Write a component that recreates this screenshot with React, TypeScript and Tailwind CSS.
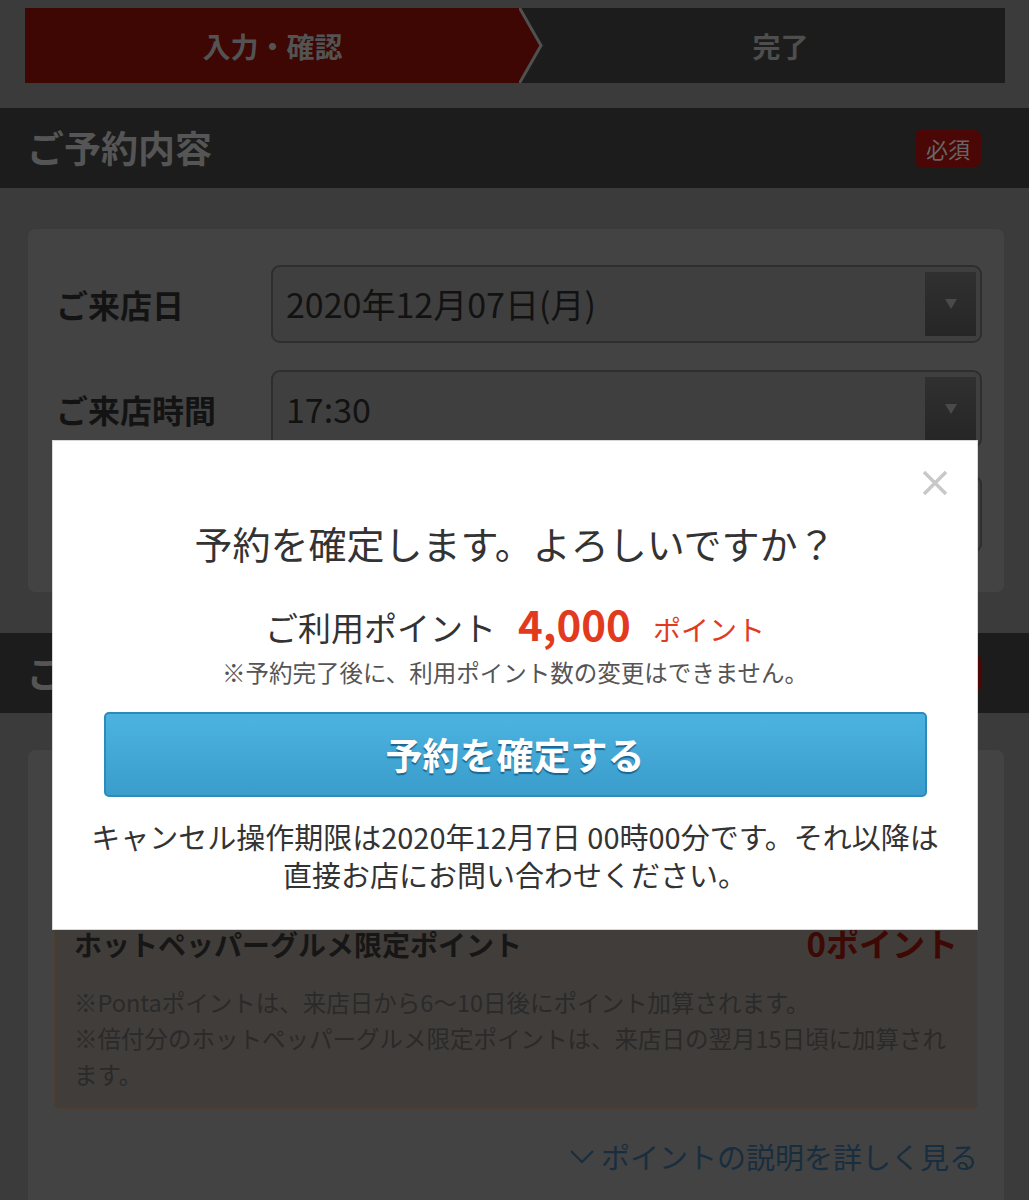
import React from "react";

const F = { fontFamily: '"Noto Sans CJK JP", "Noto Sans", sans-serif' };

function Select({ value }: { value: string }) {
  return (
    <div className="flex-1 h-[78px] rounded-[9px] border-2 border-[#2e2e2e] bg-[#3f3f3f] flex items-center relative">
      <span className="pl-[13px] text-[34px] text-[#121212] leading-none">{value}</span>
      <div className="absolute right-[4px] top-[5px] bottom-[5px] w-[51px] bg-gradient-to-b from-[#303030] to-[#262626] flex items-center justify-center">
        <svg width="14" height="12" viewBox="0 0 14 12">
          <polygon points="1,1 13,1 7,11" fill="#4a4a4a" />
        </svg>
      </div>
    </div>
  );
}

export default function App() {
  return (
    <div style={F} className="relative w-[1029px] h-[1200px] overflow-hidden bg-[#3b3b3b]">
      {/* step bar */}
      <div className="pt-[8px] pl-[25px] pr-[24px]">
        <div className="relative flex h-[75px]">
          <div className="w-[495px] bg-[#3e0703] flex items-center justify-center">
            <span className="text-[28px] font-bold text-[#535353]">入力・確認</span>
          </div>
          <div className="flex-1 bg-[#1c1c1c] flex items-center justify-center pl-[36px]">
            <span className="text-[28px] font-bold text-[#4e4e4e]">完了</span>
          </div>
          <svg className="absolute left-[494px] top-0" width="30" height="75" viewBox="0 0 30 75">
            <polygon points="0,0 1,0 22,37.5 1,75 0,75" fill="#3e0703" />
            <polyline points="0,-1 22,37.5 0,76" fill="none" stroke="#505050" strokeWidth="3" />
          </svg>
        </div>
      </div>

      {/* section header */}
      <div className="mt-[25px] h-[80px] bg-[#1c1c1c] flex items-center justify-between pl-[27px] pr-[48px]">
        <span className="text-[37px] font-bold text-[#555555]">ご予約内容</span>
        <span className="h-[37px] px-[11px] rounded-[6px] bg-[#4a0705] text-[22px] text-[#666666] flex items-center">必須</span>
      </div>

      {/* card 1 */}
      <div className="mt-[40px] ml-[27px] mr-[24px] rounded-[8px] bg-[#434343] border border-[#3a3a3a] pt-[36px] pb-[39px] pl-[28px] pr-[22px] flex flex-col gap-[27px]">
        <div className="flex items-center">
          <span className="w-[215px] text-[32px] font-bold text-[#131313]">ご来店日</span>
          <Select value="2020年12月07日(月)" />
        </div>
        <div className="flex items-center">
          <span className="w-[215px] text-[32px] font-bold text-[#131313]">ご来店時間</span>
          <Select value="17:30" />
        </div>
        <div className="flex items-center">
          <span className="w-[215px] text-[32px] font-bold text-[#131313]">ご来店人数</span>
          <Select value="2名" />
        </div>
      </div>

      {/* section header 2 */}
      <div className="mt-[40px] h-[80px] bg-[#1c1c1c] flex items-center justify-between pl-[27px] pr-[48px]">
        <span className="text-[37px] font-bold text-[#555555]">ご利用ポイント</span>
        <span className="h-[37px] px-[11px] rounded-[6px] bg-[#4a0705] text-[22px] text-[#666666] flex items-center">必須</span>
      </div>

      {/* card 2 */}
      <div className="mt-[36px] ml-[27px] mr-[24px] rounded-[8px] bg-[#434343] border border-[#3a3a3a] pt-[40px] pl-[26px] pr-[26px] pb-[40px]">
        <div className="h-[65px]" />
        <div className="rounded-[6px] border border-[#4f3e2b] bg-[#413d3a] px-[19px] pt-[10px] pb-[16px]">
          <div className="flex items-center justify-between h-[48px]">
            <span className="text-[28px] font-bold text-[#161616]">Pontaポイント</span>
            <span className="text-[32px] font-bold text-[#3e0805]">0ポイント</span>
          </div>
          <div className="flex items-center justify-between h-[48px] mt-[6px]">
            <span className="text-[28px] font-bold text-[#161616]">ホットペッパーグルメ限定ポイント</span>
            <span className="text-[33px] font-bold text-[#3e0805]">0ポイント</span>
          </div>
          <div className="mt-[16px] text-[23.5px] leading-[36px] text-[#2a2a2a]">
            <p>※Pontaポイントは、来店日から6〜10日後にポイント加算されます。</p>
            <p>※倍付分のホットペッパーグルメ限定ポイントは、来店日の翌月15日頃に加算されます。</p>
          </div>
        </div>
        <div className="mt-[26px] flex justify-end items-center gap-[6px]">
          <svg width="26" height="16" viewBox="0 0 26 16">
            <polyline points="2,2 13,13 24,2" fill="none" stroke="#182e3f" strokeWidth="2.2" />
          </svg>
          <span className="text-[29px] text-[#182e3f]">ポイントの説明を詳しく見る</span>
        </div>
      </div>

      {/* modal */}
      <div className="absolute left-[52px] top-[440px] w-[926px] h-[490px] bg-white border border-[#d8d8d8] flex flex-col items-center">
        <button className="absolute right-[28px] top-[28px] w-[28px] h-[28px] flex items-center justify-center">
          <svg width="26" height="26" viewBox="0 0 26 26">
            <path d="M2 2 L24 24 M24 2 L2 24" stroke="#c8c8c8" strokeWidth="3.5" />
          </svg>
        </button>
        <h2 className="mt-[78px] text-[38px] leading-[48px] text-[#333] font-normal">予約を確定します。よろしいですか？</h2>
        <div className="mt-[32px] flex items-baseline h-[48px]">
          <span className="text-[33px] leading-[48px] text-[#333]">ご利用ポイント</span>
          <span className="ml-[22px] text-[42px] leading-[48px] font-bold text-[#e23a1e]">4,000</span>
          <span className="ml-[22px] text-[28px] leading-[48px] text-[#e23a1e]">ポイント</span>
        </div>
        <p className="mt-[9px] text-[23.5px] leading-[32px] text-[#555]">※予約完了後に、利用ポイント数の変更はできません。</p>
        <button className="mt-[24px] w-[823px] h-[85px] shrink-0 rounded-[5px] border-2 border-[#2b8bbd] bg-gradient-to-b from-[#4cb3e0] to-[#3a9dcc] flex items-center justify-center">
          <span className="text-[37px] font-bold text-white [text-shadow:0_2px_1px_rgba(0,60,100,0.6)]">予約を確定する</span>
        </button>
        <p className="mt-[20px] text-[29px] leading-[38px] text-[#333] text-center">
          キャンセル操作期限は2020年12月7日 00時00分です。それ以降は
          <br />
          直接お店にお問い合わせください。
        </p>
      </div>
    </div>
  );
}
